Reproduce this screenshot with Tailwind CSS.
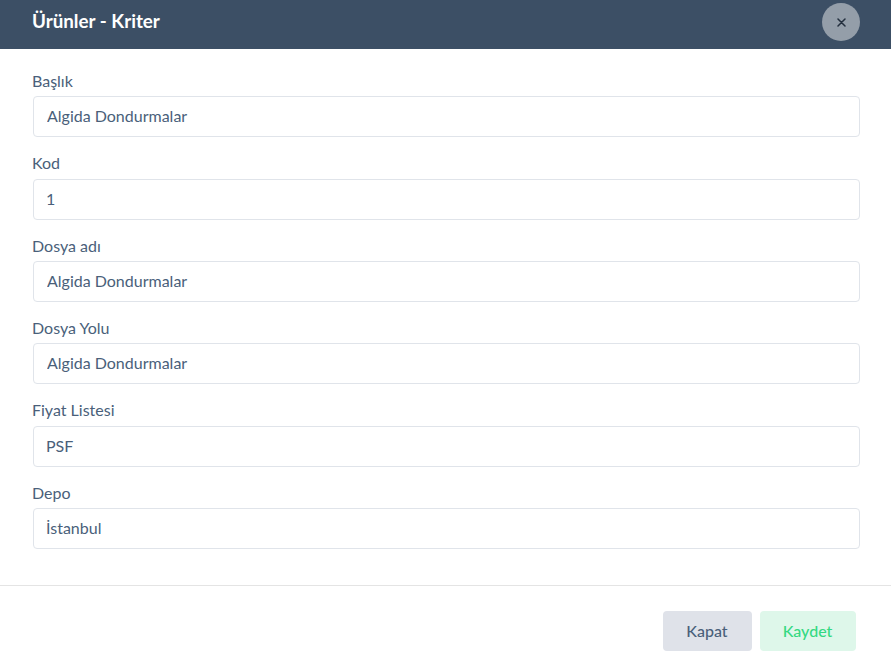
<!DOCTYPE html>
<html lang="en">
<head>
    <meta charset="UTF-8">
    <title>Ürünler - Kriter</title>
    <script src="https://cdn.jsdelivr.net/npm/@tailwindcss/browser@4"></script>
</head>
<body class="bg-white h-[667px] overflow-hidden font-['Lato',sans-serif] text-[#4a5f7a]">
    <header class="h-[49px] bg-[#3c4f65] pl-[32px] pr-[31px] pb-[5px] flex items-center justify-between">
        <h1 class="text-[18.8px] font-bold text-white mb-[2px]">Ürünler - Kriter</h1>
        <button class="w-[38px] h-[38px] rounded-full bg-[#949ea9] flex items-center justify-center">
            <svg width="9" height="9" viewBox="0 0 9 9" fill="none" stroke="#232f3e" stroke-width="1.5" stroke-linecap="round"><path d="M1 1l7 7M8 1l-7 7"/></svg>
        </button>
    </header>

    <main class="pl-[32px] pr-[31px] pt-[21.8px] h-[536px]">
        <div class="mb-[16px]">
            <label class="block text-[16px] leading-[20.4px] mb-[5px]">Başlık</label>
            <input class="w-[827px] h-[41px] pl-[13px] pr-[14px] ml-[1px] border border-[#e0e4ea] rounded-[4px] text-[16px] leading-[20px] pb-[2px] text-[#4a5f7a]" value="Algida Dondurmalar">
        </div>
        <div class="mb-[16px]">
            <label class="block text-[16px] leading-[20.4px] mb-[5px]">Kod</label>
            <input class="w-[827px] h-[41px] pl-[12px] pr-[14px] ml-[1px] border border-[#e0e4ea] rounded-[4px] text-[16px] leading-[20px] pb-[1px] text-[#4a5f7a]" value="1">
        </div>
        <div class="mb-[16px]">
            <label class="block text-[16px] leading-[20.4px] mb-[5px]">Dosya adı</label>
            <input class="w-[827px] h-[41px] pl-[13px] pr-[14px] ml-[1px] border border-[#e0e4ea] rounded-[4px] text-[16px] leading-[20px] pb-[2px] text-[#4a5f7a]" value="Algida Dondurmalar">
        </div>
        <div class="mb-[16px]">
            <label class="block text-[16px] leading-[20.4px] mb-[5px]">Dosya Yolu</label>
            <input class="w-[827px] h-[41px] pl-[13px] pr-[14px] ml-[1px] border border-[#e0e4ea] rounded-[4px] text-[16px] leading-[20px] pb-[2px] text-[#4a5f7a]" value="Algida Dondurmalar">
        </div>
        <div class="mb-[16px]">
            <label class="block text-[16px] leading-[20.4px] mb-[5px]">Fiyat Listesi</label>
            <input class="w-[827px] h-[41px] pl-[12px] pr-[14px] ml-[1px] border border-[#e0e4ea] rounded-[4px] text-[16px] leading-[20px] pb-[1px] text-[#4a5f7a]" value="PSF">
        </div>
        <div>
            <label class="block text-[16px] leading-[20.4px] mb-[5px]">Depo</label>
            <input class="w-[827px] h-[41px] pl-[12px] pr-[14px] ml-[1px] border border-[#e0e4ea] rounded-[4px] text-[16px] leading-[20px] pb-[2px] text-[#4a5f7a]" value="İstanbul">
        </div>
    </main>

    <footer class="border-t border-[#e4e4e4] pt-[25px] pr-[35px] flex justify-end gap-[8px]">
        <button class="w-[89px] h-[40px] rounded-[4px] bg-[#dfe2e9] text-[16px] font-medium text-[#4a5f7a] pr-[1px]">Kapat</button>
        <button class="w-[96px] h-[40px] rounded-[4px] bg-[#def7ea] text-[16px] font-medium text-[#34d982] pr-[1px]">Kaydet</button>
    </footer>
</body>
</html>
